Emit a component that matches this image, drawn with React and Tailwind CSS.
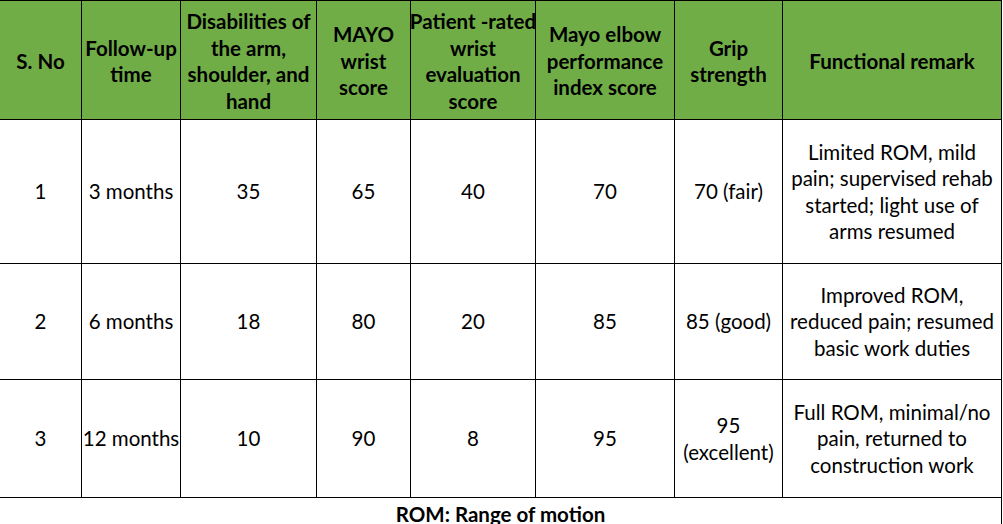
import React from "react";

const cols = "grid-cols-[82px_99px_136px_94px_125px_139px_108px_219px]";

const headers = [
  ["S. No"],
  ["Follow-up", "time"],
  ["Disabilities of", "the arm,", "shoulder, and", "hand"],
  ["MAYO", "wrist", "score"],
  ["Patient -rated", "wrist", "evaluation", "score"],
  ["Mayo elbow", "performance", "index score"],
  ["Grip", "strength"],
  ["Functional remark"],
];

const rows = [
  {
    h: "h-[144px]",
    cells: [["1"], ["3 months"], ["35"], ["65"], ["40"], ["70"], ["70 (fair)"], ["Limited ROM, mild", "pain; supervised rehab", "started; light use of", "arms resumed"]],
  },
  {
    h: "h-[116px]",
    cells: [["2"], ["6 months"], ["18"], ["80"], ["20"], ["85"], ["85 (good)"], ["Improved ROM,", "reduced pain; resumed", "basic work duties"]],
  },
  {
    h: "h-[118px]",
    cells: [["3"], ["12 months"], ["10"], ["90"], ["8"], ["95"], ["95", "(excellent)"], ["Full ROM, minimal/no", "pain, returned to", "construction work"]],
  },
];

function Cell({ lines, className }) {
  return (
    <div className={`flex flex-col items-center justify-center text-center border-r border-b border-black overflow-visible ${className}`}>
      {lines.map((l, i) => (
        <span key={i} className="whitespace-nowrap">{l}</span>
      ))}
    </div>
  );
}

export default function App() {
  return (
    <div className="w-[1003px] h-[524px] overflow-hidden bg-white text-black" style={{ fontFamily: "Lato, 'Open Sans', sans-serif" }}>
      <div className="w-[1002px] border-t border-black">
        <div className={`grid ${cols} bg-[#70ad47] font-bold text-[20.5px] leading-[26.5px]`}>
          {headers.map((h, i) => (
            <Cell key={i} lines={h} className="h-[119px] pt-[2px]" />
          ))}
        </div>
        {rows.map((r, ri) => (
          <div key={ri} className={`grid ${cols} text-[20.5px] leading-[26.3px]`}>
            {r.cells.map((c, ci) => (
              <Cell key={ci} lines={c} className={r.h} />
            ))}
          </div>
        ))}
        <div className="h-[30px] border-r border-black flex items-start justify-center pt-[3px] font-bold text-[20.5px] leading-[26px]">
          ROM: Range of motion
        </div>
      </div>
    </div>
  );
}
